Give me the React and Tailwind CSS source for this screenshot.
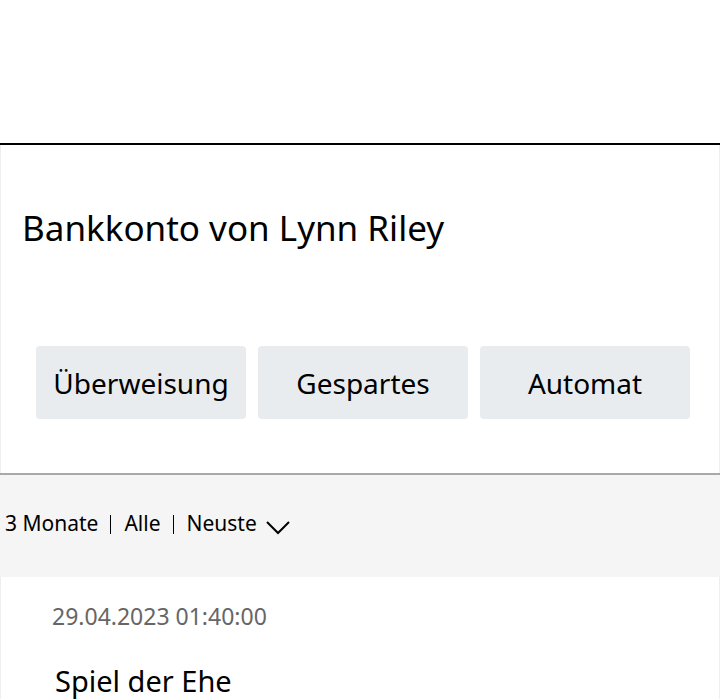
import React from 'react';

const tabs = ['Überweisung', 'Gespartes', 'Automat'];

export default function App() {
  return (
    <div className="min-h-[700px] bg-white text-black" style={{ fontFamily: '"Noto Sans", sans-serif' }}>
      <div className="h-[143px]" />
      <div className="border-t-[2px] border-black">
        <div className="border-x border-[#eeeeee]">
          <div className="px-[21px] pt-[62px]">
            <h1 className="text-[35px] leading-[42px] font-normal">Bankkonto von Lynn Riley</h1>
          </div>
          <div className="flex gap-3 pl-[35px] pr-[29px] pt-[97px] pb-[54px]">
            {tabs.map(t => (
              <button key={t} className="flex-1 h-[73px] rounded bg-[#e8ecef] text-[28px] text-black">{t}</button>
            ))}
          </div>
        </div>
        <div className="border-t-[2px] border-[#a8a8a8] bg-[#f5f5f5] h-[104px] flex items-center pl-[5px] text-[21px] pb-[4px]">
          <span>3 Monate</span>
          <div className="ml-[12px] mr-[13px] w-px h-[19px] bg-black" />
          <span>Alle</span>
          <div className="ml-[12px] mr-[13px] w-px h-[19px] bg-black" />
          <span>Neuste</span>
          <svg className="ml-[9px] mt-[8px]" width="24" height="14" viewBox="0 0 24 14" fill="none" stroke="black" strokeWidth="2">
            <path d="M1 1l11 11L23 1" />
          </svg>
        </div>
        <div className="border-x border-[#eeeeee] pt-[24px]">
          <div className="pl-[51px] text-[23px] text-[#666666] leading-[30px]">29.04.2023 01:40:00</div>
          <div className="pl-[54px] pt-[32px] text-[29px] leading-[36px]">Spiel der Ehe</div>
        </div>
      </div>
    </div>
  );
}
